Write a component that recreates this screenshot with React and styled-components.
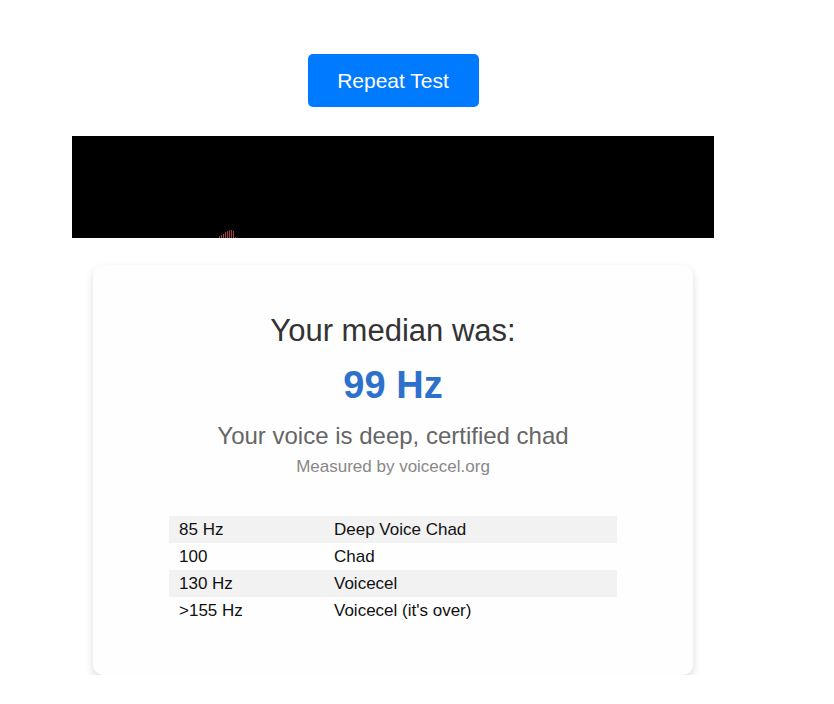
import React from "react";
import styled, { createGlobalStyle } from "styled-components";

const GlobalStyle = createGlobalStyle`
    body {
        margin: 8px;
        background: #ffffff;
        font-family: "Liberation Sans", Arial, sans-serif;
    }
`

const Page = styled.div`
    width: 770px;
    display: flex;
    flex-direction: column;
    align-items: center;
    padding-top: 46px;
`

const RepeatButton = styled.button`
    width: 171px;
    height: 53px;
    background-color: #007bff;
    color: #ffffff;
    border: none;
    border-radius: 5px;
    font-family: "Liberation Sans", Arial, sans-serif;
    font-size: 21px;
    cursor: pointer;
`

const Visualizer = styled.div`
    width: 642px;
    height: 102px;
    margin-top: 29px;
    background-color: #000000;
    display: flex;
    align-items: flex-end;
    padding-left: 147px;
    box-sizing: border-box;
`

const Card = styled.div`
    width: 600px;
    height: 410px;
    margin-top: 27px;
    background-color: #fefefe;
    border-radius: 10px;
    box-shadow: 0 4px 8px rgba(0, 0, 0, 0.14);
    box-sizing: border-box;
    padding: 49px 20px 0;
    display: flex;
    flex-direction: column;
    align-items: center;
`

const Heading = styled.h2`
    margin: 0;
    font-size: 31px;
    font-weight: normal;
    color: #333333;
    line-height: 34px;
`

const Median = styled.div`
    margin-top: 15px;
    font-size: 38px;
    font-weight: bold;
    color: #2e71cc;
    line-height: 44px;
`

const Verdict = styled.p`
    margin: 15px 0 0;
    font-size: 24px;
    color: #666666;
    line-height: 28px;
`

const Source = styled.p`
    margin: 7px 0 0;
    font-size: 17px;
    color: #888888;
    line-height: 20px;
`

const Table = styled.table`
    width: 448px;
    margin-top: 39px;
    border-collapse: collapse;
    font-size: 17px;
    color: #111111;
`

const Row = styled.tr`
    background-color: ${(p) => (p.shaded ? "#f2f2f2" : "transparent")};
`

const Cell = styled.td`
    height: 27px;
    padding: 0 10px;
    box-sizing: border-box;
    width: ${(p) => p.w || "auto"};
`

const rows = [
    ["85 Hz", "Deep Voice Chad"],
    ["100", "Chad"],
    ["130 Hz", "Voicecel"],
    [">155 Hz", "Voicecel (it's over)"],
];

const bars = [2, 3, 4, 6, 7, 8, 8, 7, 1];

const Bars = () => (
    <svg width="20" height="9" viewBox="0 0 20 9" shapeRendering="crispEdges">
        {bars.map((h, i) => (
            <rect key={i} x={i * 2} y={9 - h} width="1" height={h} fill="#a83d3d" />
        ))}
    </svg>
);

const App = () => {
    return (
        <>
            <GlobalStyle />
            <Page>
                <RepeatButton>Repeat Test</RepeatButton>
                <Visualizer>
                    <Bars />
                </Visualizer>
                <Card>
                    <Heading>Your median was:</Heading>
                    <Median>99 Hz</Median>
                    <Verdict>Your voice is deep, certified chad</Verdict>
                    <Source>Measured by voicecel.org</Source>
                    <Table>
                        <tbody>
                            {rows.map((r, i) => (
                                <Row key={i} shaded={i % 2 === 0}>
                                    <Cell w="155px">{r[0]}</Cell>
                                    <Cell>{r[1]}</Cell>
                                </Row>
                            ))}
                        </tbody>
                    </Table>
                </Card>
            </Page>
        </>
    );
};

export default App;
